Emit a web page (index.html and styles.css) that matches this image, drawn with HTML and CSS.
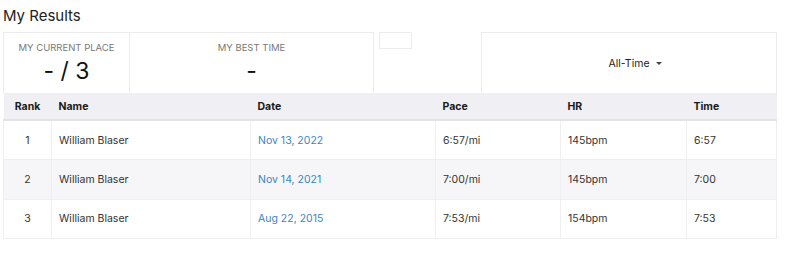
FILE: index.html
```html
<!DOCTYPE html>
<html>
<head>
<meta charset="utf-8">
<link rel="stylesheet" href="styles.css">
</head>
<body>
<div class="page">
  <h1 class="title">My Results</h1>
  <div class="stats-row">
    <div class="stats-card">
      <div class="stat stat-place">
        <div class="stat-label">MY CURRENT PLACE</div>
        <div class="stat-value">- / 3</div>
      </div>
      <div class="stat stat-best">
        <div class="stat-label">MY BEST TIME</div>
        <div class="stat-value">-</div>
      </div>
    </div>
    <div class="mini-box"></div>
    <div class="spacer"></div>
    <div class="dropdown">
      <span class="dropdown-text">All-Time</span>
      <span class="caret"></span>
    </div>
  </div>
  <table class="results">
    <colgroup>
      <col class="c-rank"><col class="c-name"><col class="c-date"><col class="c-pace"><col class="c-hr"><col class="c-time">
    </colgroup>
    <thead>
      <tr><th class="rank">Rank</th><th>Name</th><th>Date</th><th>Pace</th><th>HR</th><th>Time</th></tr>
    </thead>
    <tbody>
      <tr><td class="rank">1</td><td>William Blaser</td><td><a class="date-link">Nov 13, 2022</a></td><td>6:57/mi</td><td>145bpm</td><td>6:57</td></tr>
      <tr class="alt"><td class="rank">2</td><td>William Blaser</td><td><a class="date-link">Nov 14, 2021</a></td><td>7:00/mi</td><td>145bpm</td><td>7:00</td></tr>
      <tr><td class="rank">3</td><td>William Blaser</td><td><a class="date-link">Aug 22, 2015</a></td><td>7:53/mi</td><td>154bpm</td><td>7:53</td></tr>
    </tbody>
  </table>
</div>
</body>
</html>
```
FILE: styles.css
```css
* { box-sizing: border-box; }
html, body { margin: 0; padding: 0; background: #fff; }
body { font-family: Inter, "Noto Sans", "Liberation Sans", sans-serif; color: #333; }
.page { padding-left: 3px; width: 777px; }
.title { margin: 0; height: 32px; line-height: 32px; font-size: 15px; font-weight: 400; color: #222; }
.stats-row { display: flex; align-items: flex-start; height: 61px; }
.stats-card { display: flex; width: 371px; height: 61px; border: 1px solid #ececee; border-bottom: none; }
.stat { display: flex; flex-direction: column; align-items: center; padding-top: 9px; }
.stat-place { width: 126px; border-right: 1px solid #ececee; }
.stat-best { flex: 1; }
.stat-label { font-size: 9.5px; color: #777; line-height: 12px; }
.stat-value { font-size: 23px; color: #111; line-height: 26px; margin-top: 4px; }
.mini-box { width: 33px; height: 17px; border: 1px solid #ececee; margin-left: 5px; }
.spacer { flex: 1; }
.dropdown { width: 296px; height: 61px; border: 1px solid #ececee; border-bottom: none; display: flex; align-items: center; justify-content: center; gap: 6px; padding-left: 12px; font-size: 10.5px; color: #222; }
.caret { width: 0; height: 0; border-left: 3px solid transparent; border-right: 3px solid transparent; border-top: 3px solid #444; margin-top: 1px; }
.results { border-collapse: collapse; width: 773px; table-layout: fixed; font-size: 10.5px; }
.c-rank { width: 48px; } .c-name { width: 199px; } .c-date { width: 185px; } .c-pace { width: 125px; } .c-hr { width: 126px; } .c-time { width: 90px; }
.results thead tr { background: #efeff4; }
.results th { height: 27px; text-align: left; font-weight: 700; font-size: 10.5px; color: #1a1a1a; padding: 0 7px; border-bottom: 2px solid #e2e2e7; }
.results td { height: 39.5px; padding: 0 7px; border: 1px solid #efeff1; color: #333; }
.results tbody tr:first-child td { border-top: none; }
.results .rank { text-align: center; padding: 0; }
.results tr.alt { background: #f6f6f8; }
.date-link { color: #3a85c6; text-decoration: none; }
```
